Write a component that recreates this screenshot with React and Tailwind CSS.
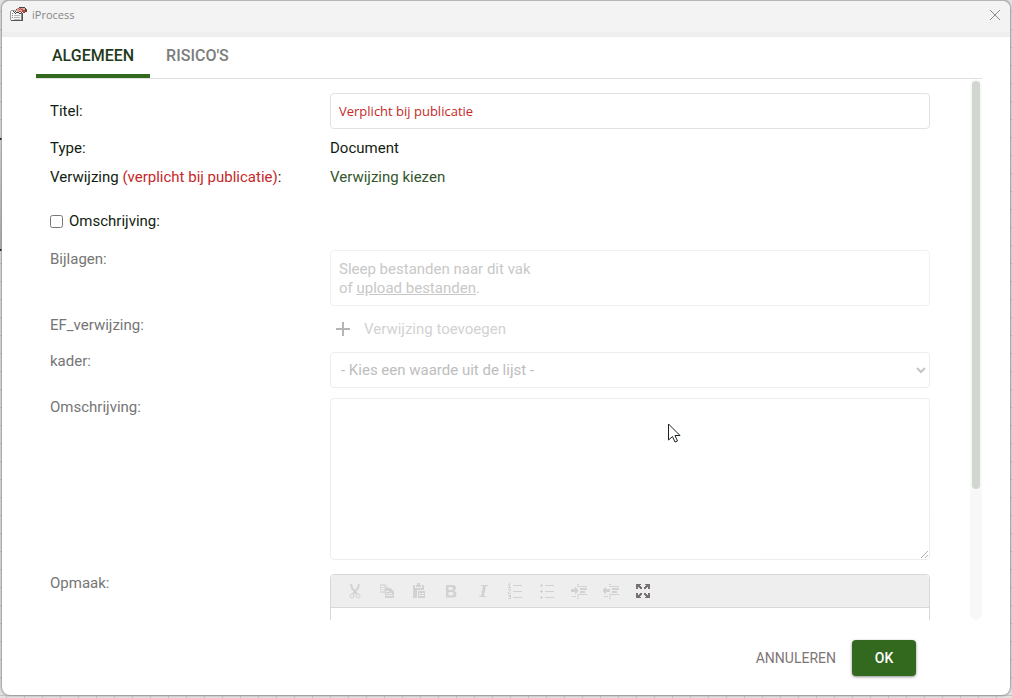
import React from 'react';

function AppIcon() {
  return (
    <svg width="17" height="16" viewBox="0 0 17 16" shapeRendering="crispEdges" aria-hidden="true">
      <path d="M1 4h12v10H1z" fill="#f4f4f4" />
      <path d="M0 4h1v9H0zM1 3h4v1H1z" fill="#9c9c9c" />
      <path d="M1 13h12v1H1zM12 6h1v8h-1z" fill="#555555" />
      <path d="M2 6h1v1H2zM2 8h1v1H2zM2 10h1v1H2z" fill="#7c8ba0" />
      <path d="M4 8h6v1H4zM4 10h6v1H4zM4 12h6v1H4z" fill="#b3bac0" />
      <path d="M11 6h1v7h-1z" fill="#7d8a86" />
      <path d="M7 1h9v4H7zM5 3h3v1H5z" fill="#dba79f" />
      <path d="M8 1h1v1H8zM10 1h1v1h-1zM9 2h1v1H9zM11 2h2v1h-2zM12 3h3v2h-3zM9 4h2v1H9z" fill="#bd4a43" />
      <path d="M9 0h6v1H9zM6 2h1v1H6zM5 4h1v1H5zM3 4h1v1H3zM4 5h1v1H4zM6 5h2v1H6zM5 6h1v1H5zM8 5h1v1H8zM9 6h2v1H9zM11 5h1v1h-1zM15 1h1v4h-1z" fill="#4d4444" />
      <path d="M13 5h2v1h-2zM16 2h1v3h-1z" fill="#7b3f3d" />
    </svg>
  );
}

function ToolIcon({ children }) {
  return (
    <svg width="16" height="16" viewBox="0 0 16 16" fill="currentColor" shapeRendering="crispEdges" aria-hidden="true">
      {children}
    </svg>
  );
}

const tools = [
  {
    name: 'Knippen',
    icon: (
      <g fill="none" stroke="currentColor" shapeRendering="auto">
        <path d="M4 1l1 4 5 6M12 1l-1 4-5 6" strokeWidth="2" />
        <circle cx="5" cy="13" r="2" strokeWidth="1" />
        <circle cx="11" cy="13" r="2" strokeWidth="1" />
      </g>
    ),
  },
  {
    name: 'Kopiëren',
    icon: (
      <>
        <path d="M1 1h5l3 3v6H1z" opacity=".6" />
        <path d="M6 5h6v1h1v1h1v1h1v7H6z" />
        <path d="M7 8h3v1H7zM7 10h2v1H7zM10 10h3v1h-3zM7 12h7v1H7zM2 3h3v1H2zM2 5h3v1H2zM2 7h3v1H2z" fill="#eeeeee" />
      </>
    ),
  },
  {
    name: 'Plakken',
    icon: (
      <>
        <path d="M2 2h2v3h7V2h2v5H7v8H2zM6 0h3v2h1v2H5V2h1z" />
        <path d="M7 8h7v7H7z" />
        <path d="M6 7h8v1H6zM6 8h1v7H6zM8 10h2v1H8zM11 10h2v1h-2zM8 12h5v1H8z" fill="#eeeeee" />
      </>
    ),
  },
  {
    name: 'Vet',
    icon: (
      <path
        d="M3 2h6.500q3.500 0 3.500 3 0 2-2 2.700 2.500 0.800 2.500 3.200 0 3.600-4 3.600H3zM5.500 4v3H8q2.200 0 2.200-1.500T8 4zM5.500 9v3.500H8.500q2.200 0 2.200-1.800T8.500 9z"
        fillRule="evenodd"
        shapeRendering="auto"
      />
    ),
  },
  { name: 'Cursief', icon: <path d="M6 2h7v1h-2L9 13h2v1H4v-1h2L8 3H6z" shapeRendering="auto" /> },
  {
    name: 'Genummerde lijst',
    icon: (
      <path d="M2 0h1v4h1v1H1V4h1V2H1V1h1zM1 6h3v2H3v1H2v1h2v1H1V9h1V8h1V7H1zM1 12h3v4H1v-1h2v-1H2v-1H1zM6 2h9v1H6zM6 8h9v1H6zM6 14h9v1H6z" />
    ),
  },
  {
    name: 'Opsomming',
    icon: (
      <path d="M1 2h3v1H1zM2 1h1v3H2zM1 8h3v1H1zM2 7h1v3H2zM1 14h3v1H1zM2 13h1v3H2zM6 2h9v1H6zM6 8h9v1H6zM6 14h9v1H6z" />
    ),
  },
  {
    name: 'Inspringing vergroten',
    icon: (
      <path d="M6 1h2v1H6zM6 3h10v1H6zM9 5h7v2H9zM9 8h5v2H9zM6 11h10v1H6zM1 13h4v1H1zM6 13h2v1H6zM6 15h2v1H6zM0 6h4v3H0zM4 4h1v7H4zM5 5h1v5H5zM6 6h1v3H6z" />
    ),
  },
  {
    name: 'Inspringing verkleinen',
    icon: (
      <path d="M6 1h2v1H6zM6 3h10v1H6zM9 5h7v2H9zM9 8h5v2H9zM6 11h10v1H6zM1 13h4v1H1zM6 13h2v1H6zM6 15h2v1H6zM3 6h4v3H3zM1 5h1v5H1zM0 6h1v3H0zM2 4h1v7H2z" />
    ),
  },
  {
    name: 'Maximaliseren',
    active: true,
    icon: (
      <path d="M1 1h5v1H5v1h1v1h1v2H5V5H4V4H3v2H1zM15 1h-5v1h1v1h-1v1H9v2h2V5h1V4h1v2h2zM1 15h5v-1H5v-1h1v-1h1v-2H5v1H4v1H3v-2H1zM15 15h-5v-1h1v-1h-1v-1H9v-2h2v1h1v1h1v-2h2z" />
    ),
  },
];

function Row({ label, htmlFor, className = '', muted = false, children }) {
  return (
    <div className={`grid grid-cols-[280px_minmax(0,1fr)] ${className}`}>
      <label htmlFor={htmlFor} className={muted ? 'text-[#757575]' : ''}>
        {label}
      </label>
      {children}
    </div>
  );
}

function ScrollBar() {
  return (
    <div className="w-3 shrink-0 rounded-full bg-[#f8f8f8] p-0.5" aria-hidden="true">
      <div className="h-[76%] rounded-full bg-[#d1d7d0]" />
    </div>
  );
}

export default function App() {
  return (
    <div className="relative h-screen overflow-hidden bg-[#e2e2e2] bg-[linear-gradient(#c2c2c2_1px,transparent_1px),linear-gradient(90deg,#c2c2c2_1px,transparent_1px)] bg-[size:18px_18px] bg-[position:6px_11px] px-0.5 pb-[3px] font-['Roboto',sans-serif] text-[15px] leading-[18px] text-[#111d11]">
      <div className="absolute left-0 top-[138px] h-[113px] w-3 border-y-2 border-black bg-linear-to-b from-[#dcdce0] to-[#a8a8b0]" />
      <div
        role="dialog"
        aria-label="iProcess"
        className="relative flex h-full flex-col overflow-hidden rounded-lg border-t border-[#b5b5b5] bg-white shadow-[0_0_2px_1px_#999999]"
      >
        <header className="flex h-9 shrink-0 items-center border-b-[5px] border-[#eeeeee] bg-[#f3f3f3] pb-1 pl-2 pr-[9px]">
          <AppIcon />
          <h1 className="ml-[5px] font-['Open_Sans',sans-serif] text-[11px] leading-4 text-[#858585]">iProcess</h1>
          <button type="button" aria-label="Sluiten" className="ml-auto text-[#8c8c8c]">
            <svg width="12" height="12" viewBox="0 0 12 12" fill="none" stroke="currentColor">
              <path d="M1 1l10 10M11 1L1 11" />
            </svg>
          </button>
        </header>

        <main className="flex min-h-0 flex-1 flex-col pl-[34px] pr-7">
          <nav role="tablist" className="flex h-[42px] shrink-0 border-b border-[#e0e0e0] text-base font-medium">
            <button type="button" role="tab" aria-selected="true" className="border-b-4 border-[#33691e] px-4 text-[#1f3a1b]">
              ALGEMEEN
            </button>
            <button type="button" role="tab" aria-selected="false" className="border-b-4 border-transparent px-4 text-[#7d7d7d]">
              RISICO'S
            </button>
          </nav>

          <div className="flex min-h-0 flex-1">
            <form className="min-w-0 flex-1 overflow-hidden pl-3.5 pr-10 pt-3.5">
              <Row label="Titel:" htmlFor="title" className="items-center">
                <input
                  id="title"
                  type="text"
                  placeholder="Verplicht bij publicatie"
                  className="h-9 w-full rounded border border-[#e2e2e2] px-2 font-['Open_Sans',sans-serif] text-[13px] placeholder:text-[#c62828]"
                />
              </Row>
              <Row label="Type:" htmlFor="type" className="mt-2.5">
                <output id="type">Document</output>
              </Row>
              <Row
                label={
                  <>
                    Verwijzing <span className="text-[#c62828]">(verplicht bij publicatie)</span>:
                  </>
                }
                htmlFor="reference"
                className="mt-[11px]"
              >
                <button id="reference" type="button" className="justify-self-start text-[#33562c]">
                  Verwijzing kiezen
                </button>
              </Row>
              <label className="mt-[26px] flex items-center gap-1.5">
                <input type="checkbox" className="size-[13px]" />
                Omschrijving:
              </label>

              <Row label="Bijlagen:" htmlFor="files" muted className="mt-5">
                <div className="rounded border border-[#f0f0f0] px-2 pb-[7px] pt-[9px] leading-[19px] text-[#c8c8c8]">
                  Sleep bestanden naar dit vak
                  <br />
                  of{' '}
                  <button id="files" type="button" disabled className="underline">
                    upload bestanden
                  </button>
                  .
                </div>
              </Row>
              <Row label="EF_verwijzing:" htmlFor="add-reference" muted className="mt-2.5">
                <button
                  id="add-reference"
                  type="button"
                  disabled
                  className="flex h-[26px] items-center gap-3.5 justify-self-start pl-1.5 text-[#d2d2d2]"
                >
                  <svg width="14" height="14" viewBox="0 0 14 14" fill="#b5b5b5" aria-hidden="true">
                    <path d="M6 0h2v6h6v2H8v6H6V8H0V6h6z" />
                  </svg>
                  Verwijzing toevoegen
                </button>
              </Row>
              <Row label="kader:" htmlFor="frame" muted className="mt-2.5">
                <div className="grid items-center">
                  <select
                    id="frame"
                    disabled
                    className="col-start-1 row-start-1 h-9 w-full appearance-none rounded border border-[#ededed] px-2.5 text-[#bdbdbd] opacity-100"
                  >
                    <option>- Kies een waarde uit de lijst -</option>
                  </select>
                  <svg
                    className="pointer-events-none col-start-1 row-start-1 mr-1 justify-self-end"
                    width="10"
                    height="8"
                    viewBox="0 0 10 8"
                    fill="none"
                    stroke="#c4c4c4"
                    strokeWidth="2"
                    aria-hidden="true"
                  >
                    <path d="M1 2l4 4 4-4" />
                  </svg>
                </div>
              </Row>
              <Row label="Omschrijving:" htmlFor="description" muted className="mt-2.5">
                <div className="relative">
                  <textarea
                    id="description"
                    disabled
                    className="block h-[162px] w-full resize rounded border border-[#dbdbdb] p-2 opacity-50"
                  />
                  <svg className="absolute left-[338px] top-[25px]" width="13" height="20" viewBox="0 0 13 20" fill="white" stroke="#1c251c" aria-hidden="true">
                    <path d="M.5 1v16l4-3.500 2.500 5.500 2.500-1-2.500-5.500h5z" />
                  </svg>
                </div>
              </Row>
              <Row label="Opmaak:" htmlFor="markup" muted className="mt-3.5">
                <div className="overflow-hidden rounded border border-[#d8d8d8]">
                  <div role="toolbar" aria-label="Opmaak" className="flex h-[33px] items-center border-b border-[#d8d8d8] bg-[#eeeeee] pl-2">
                    {tools.map((tool) => (
                      <button
                        key={tool.name}
                        type="button"
                        aria-label={tool.name}
                        disabled={!tool.active}
                        className={`flex w-8 justify-center ${tool.active ? 'text-[#777171]' : 'text-[#d0d3d1]'}`}
                      >
                        <ToolIcon>{tool.icon}</ToolIcon>
                      </button>
                    ))}
                  </div>
                  <textarea id="markup" disabled className="block h-40 w-full resize-none p-2" />
                </div>
              </Row>
            </form>
            <ScrollBar />
          </div>
        </main>

        <footer className="flex shrink-0 items-center justify-end pb-[19px] pr-[94px] pt-5 text-sm">
          <button type="button" className="h-9 px-4 text-[#7d7575]">
            ANNULEREN
          </button>
          <button type="button" className="h-9 w-16 rounded bg-[#33691e] font-medium text-white shadow-[0_1px_3px_rgba(0,0,0,0.45)]">
            OK
          </button>
        </footer>
      </div>
    </div>
  );
}
